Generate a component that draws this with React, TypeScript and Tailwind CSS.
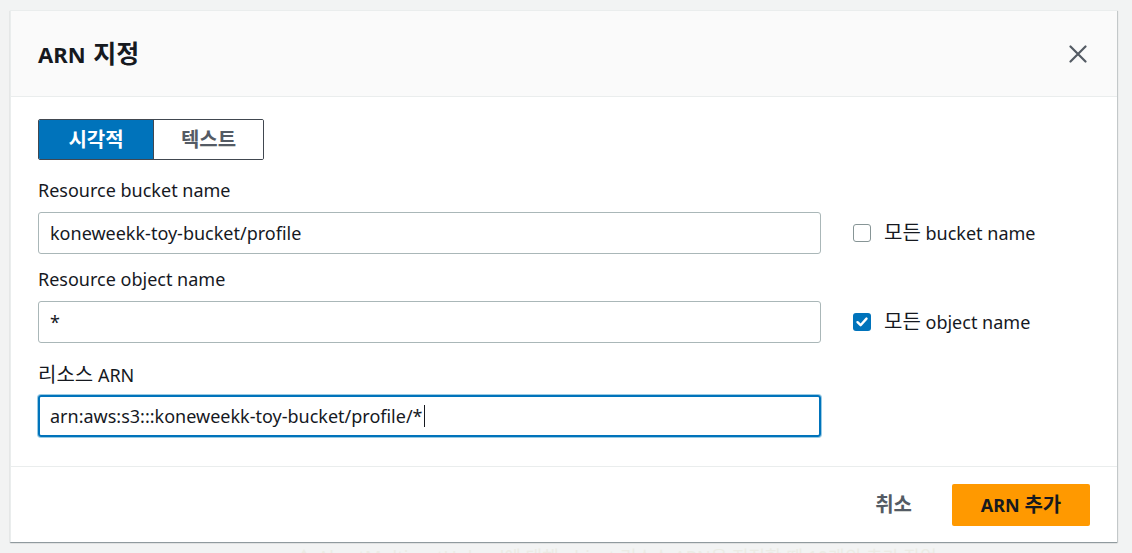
import React from 'react';

const font = { fontFamily: '"Noto Sans", "Noto Sans CJK KR", sans-serif' };

// Korean glyphs render a bit larger than the latin text in the reference
function K({ children, size = 'text-[20px]' }: { children: React.ReactNode; size?: string }) {
  return <span className={size}>{children}</span>;
}

function Checkbox({ checked }: { checked: boolean }) {
  if (checked) {
    return (
      <span className="flex h-[18px] w-[18px] items-center justify-center rounded-[3px] bg-[#0073bb]">
        <svg width="14" height="14" viewBox="0 0 14 14" fill="none">
          <path d="M2.5 7.2 L5.6 10.2 L11.5 3.6" stroke="#fff" strokeWidth="2.4" strokeLinecap="round" strokeLinejoin="round" />
        </svg>
      </span>
    );
  }
  return <span className="h-[18px] w-[18px] rounded-[3px] border-[1.5px] border-[#879596] bg-white" />;
}

interface FieldRowProps {
  label: React.ReactNode;
  value: string;
  focused?: boolean;
  check?: { label: string; checked: boolean };
  className?: string;
}

function FieldRow({ label, value, focused, check, className }: FieldRowProps) {
  return (
    <div className={className}>
      <div className="text-[18px] leading-[22px] text-[#16191f]">{label}</div>
      <div className="flex items-center">
        <div
          className={
            focused
              ? 'mt-[9px] flex h-[42px] w-[783px] items-center rounded-[3px] border-2 border-[#0073bb] px-[10px] text-[18px] text-[#16191f] shadow-[0_0_0_1px_#99cbe4]'
              : 'mt-[11px] flex h-[42px] w-[783px] items-center rounded-[3px] border border-[#aab7b8] px-[11px] text-[18px] text-[#16191f]'
          }
        >
          <span>{value}</span>
          {focused && <span className="ml-[1px] h-[22px] w-px bg-[#16191f]" />}
        </div>
        {check && (
          <label className="ml-[32px] mt-[10px] flex items-center gap-[13px] text-[18px] leading-[22px] text-[#16191f]">
            <Checkbox checked={check.checked} />
            <span>
              <K>모든</K> {check.label}
            </span>
          </label>
        )}
      </div>
    </div>
  );
}

export default function App() {
  return (
    <div className="h-[553px] w-[1132px] overflow-hidden bg-[#f2f3f3] pl-[10px] pt-[10px]" style={font}>
      <div className="w-[1107px] border-t border-l border-[#eaeded] bg-white shadow-[0_1px_1px_0_rgba(0,28,36,0.3),1px_1px_1px_0_rgba(0,28,36,0.15)]">
        {/* header */}
        <div className="flex h-[86px] items-center justify-between border-b border-[#eaeded] bg-[#fafafa] pl-[27px] pr-[29px]">
          <h2 className="text-[22px] font-bold leading-[28px] text-[#16191f]">
            ARN <K size="ml-[2px] text-[25px]">지정</K>
          </h2>
          <button className="flex h-[20px] w-[20px] items-center justify-center">
            <svg width="18" height="18" viewBox="0 0 18 18" fill="none">
              <path d="M1.5 1.5 L16.5 16.5 M16.5 1.5 L1.5 16.5" stroke="#545b64" strokeWidth="2.2" strokeLinecap="round" />
            </svg>
          </button>
        </div>

        {/* body */}
        <div className="px-[27px] pb-[29px] pt-[22px]">
          <div className="flex h-[41px] w-[226px] overflow-hidden rounded-[2px] border border-[#414750] text-[20px] font-bold">
            <div className="flex w-[114px] items-center justify-center bg-[#0073bb] text-white">시각적</div>
            <div className="flex flex-1 items-center justify-center border-l border-[#414750] bg-white text-[#545b64]">텍스트</div>
          </div>

          <FieldRow
            className="mt-[19px]"
            label="Resource bucket name"
            value="koneweekk-toy-bucket/profile"
            check={{ label: 'bucket name', checked: false }}
          />
          <FieldRow
            className="mt-[14px]"
            label="Resource object name"
            value="*"
            check={{ label: 'object name', checked: true }}
          />
          <FieldRow
            className="mt-[21px]"
            label={
              <>
                <K>리소스</K> ARN
              </>
            }
            value="arn:aws:s3:::koneweekk-toy-bucket/profile/*"
            focused
          />
        </div>

        {/* footer */}
        <div className="flex h-[76px] items-center justify-end gap-[40px] border-t border-[#eaeded] pr-[27px]">
          <button className="text-[20px] font-bold text-[#545b64]">취소</button>
          <button className="h-[42px] w-[138px] rounded-[2px] bg-[#ff9900] text-[18px] font-bold text-[#16191f]">
            ARN <K>추가</K>
          </button>
        </div>
      </div>

      <div className="mt-[4px] pl-[285px] text-[18px] leading-[22px] text-[#ebebe4]">
        ▲ AbortMultipartUpload에 대해 object 리소스 ARN을 지정할 때 10개의 추가 작업
      </div>
    </div>
  );
}
